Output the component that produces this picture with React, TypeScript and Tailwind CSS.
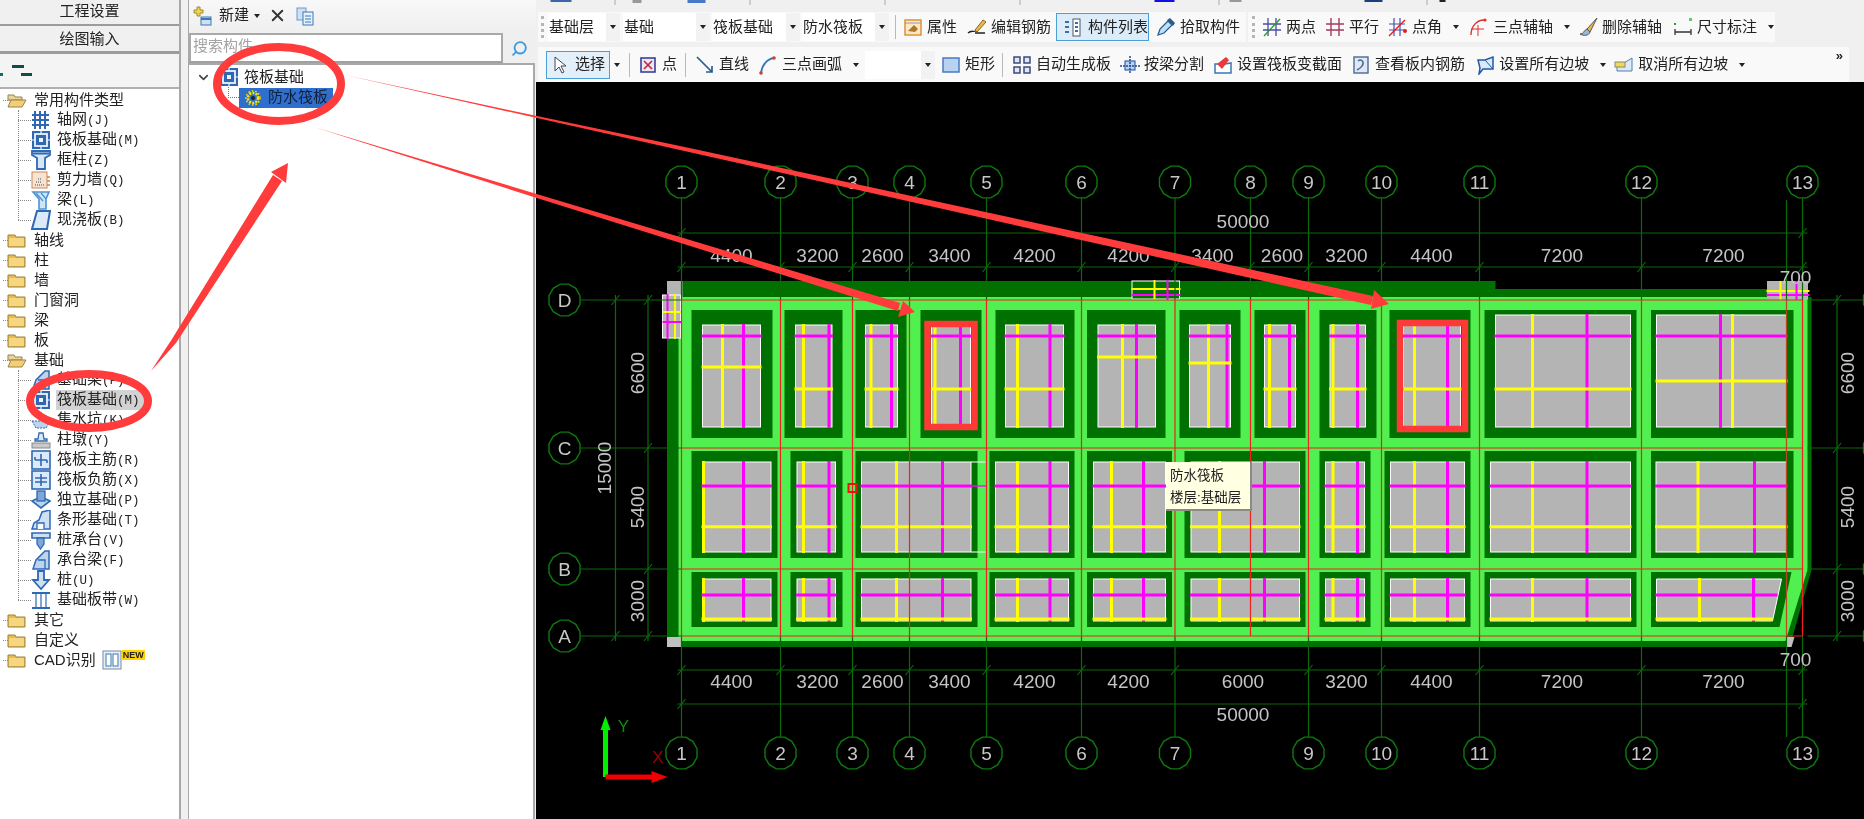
import type { ReactNode } from "react";
import { Search, ChevronDown, X } from "lucide-react";

const blue = "#2f68b4";

function Icon({ name }: { name: string }) {
  const wrap = (c: ReactNode) => (
    <svg viewBox="0 0 20 20" className="w-5 h-5 shrink-0">{c}</svg>
  );
  switch (name) {
    case "folder":
      return wrap(<><path d="M1 5h7l1 2h9v10H1z" fill="#e8bb4a" stroke="#9a8348" /><path d="M2 8h15v8H2z" fill="#f6d77f" /></>);
    case "open":
      return wrap(<><path d="M1 5h6l1 2h7v3H1z" fill="#e9d49c" stroke="#9a8348" /><path d="M4 10h15l-4 7H1z" fill="#f2cf74" stroke="#9a8348" /></>);
    case "grid":
      return wrap(<g stroke={blue} strokeWidth="2" fill="none"><path d="M1 5h17M1 10h17M1 15h17M4 1v18M9 1v18M14 1v18" /></g>);
    case "raft":
      return wrap(<><rect x="1" y="1" width="18" height="18" fill={blue} /><rect x="4" y="4" width="12" height="12" fill="none" stroke="#eef4fb" strokeWidth="1.8" /><rect x="8" y="8" width="4" height="4" fill="#eef4fb" /><path d="M1 10h3M16 10h3M10 1v3M10 16v3" stroke="#eef4fb" strokeWidth="1.2" /></>);
    case "column":
      return wrap(<><path d="M1 1h18v4l-5 3v11H6V8L1 5z" fill="#d7e6f6" stroke={blue} strokeWidth="1.8" /><path d="M2 3.5h16" stroke={blue} strokeWidth="2" /></>);
    case "wall":
      return wrap(<><rect x="1" y="2" width="15" height="16" fill="#f6e3d2" stroke="#c98a5a" /><path d="M4 15h9M5 12h6M7 9h3" stroke="#999" strokeWidth="1.8" strokeDasharray="1 1" /><path d="M16 7h3M16 11h3M16 15h3" stroke="#e08030" strokeWidth="1.3" /></>);
    case "beam":
      return wrap(<><path d="M2 2h16l-3 7v10H8V9z" fill="#cfe4f7" stroke="#4d92d3" strokeWidth="1.6" /><path d="M5 3l7 8M10 3l5 6" stroke="#4d92d3" strokeWidth="1.3" /></>);
    case "slab":
      return wrap(<><path d="M6 1h13l-3 18H1z" fill="#dbe9f8" stroke={blue} strokeWidth="2" /></>);
    case "fbeam":
      return wrap(<><path d="M2 19l3-9 9-9h4v18H2z" fill="#bcd4ee" stroke={blue} strokeWidth="1.5" /><path d="M7 10h7v9" fill="none" stroke={blue} strokeWidth="1.3" /></>);
    case "pit":
      return wrap(<><path d="M1 11h18l-4 7H5z" fill="#bcd4ee" stroke={blue} strokeDasharray="2 1" /><path d="M10 2v8M6 6h8" stroke={blue} /></>);
    case "pier":
      return wrap(<><path d="M8 3h4l1 6h3v2H4V9h3z" fill="#dfe8f2" stroke={blue} strokeWidth="1.3" /><rect x="1" y="13" width="18" height="5" fill="#c9c9c9" stroke="#888" /></>);
    case "rebar1":
    case "rebar2":
      return wrap(<><rect x="1" y="1" width="18" height="18" fill="#dbe9f8" stroke={blue} strokeWidth="1.6" /><path d={name === "rebar1" ? "M4 10h12M10 4v12M4 7v3M16 10v3" : "M4 8h12M4 12h12M10 4v12"} stroke={blue} strokeWidth="1.6" fill="none" /></>);
    case "iso":
      return wrap(<><path d="M1 11l9-4 9 4-9 7z" fill="#bcd4ee" stroke={blue} strokeWidth="1.6" /><rect x="6" y="1" width="8" height="10" fill="#7ea7d8" stroke={blue} strokeWidth="1.3" /></>);
    case "strip":
      return wrap(<><path d="M1 19l2-6 5-3 3-8 4-1 4-1v19z" fill="#cfe0f3" stroke={blue} strokeWidth="1.5" /><path d="M6 19v-6h7v6" fill="#fff" stroke={blue} strokeWidth="1.3" /></>);
    case "cap":
      return wrap(<><path d="M1 3h18v5H1z" fill="#cfe0f3" stroke={blue} strokeWidth="1.6" /><path d="M6 8h7v6l-3.5 5L6 14z" fill="#7ea7d8" stroke={blue} strokeWidth="1.3" /></>);
    case "pile":
      return wrap(<path d="M7 1h6v9h5l-8 9-8-9h5z" fill="#cfe0f3" stroke={blue} strokeWidth="1.8" />);
    case "band":
      return wrap(<><path d="M1 3h18M1 18h18" stroke={blue} strokeWidth="2.2" /><path d="M5 3v14M10 3v14M15 3v14" stroke={blue} strokeWidth="1.2" /></>);
    case "prop":
      return wrap(<><rect x="2" y="3" width="16" height="15" fill="#fbe9c8" stroke="#e08a2a" strokeWidth="1.4" /><path d="M5 14l6-6 4 4-3 3z" fill="#a8792a" /><path d="M2 6h16" stroke="#999" /></>);
    case "edit":
      return wrap(<><path d="M1 16c3-3 5-1 8-2M18 16H8" stroke="#222" strokeWidth="1.3" fill="none" /><path d="M8 13l8-10 3 2-9 10z" fill="#e9b84c" stroke="#8a6a20" /></>);
    case "list":
      return wrap(<><rect x="11" y="2" width="7" height="17" fill="#fff" stroke="#556" /><path d="M3 5h4M3 10h4M3 15h4M13 6h3M13 10h3M13 14h3" stroke="#3a6ea8" strokeWidth="2" /></>);
    case "pick":
      return wrap(<><path d="M2 18l2-6 8-8 4 4-8 8z" fill="#bfe0f5" stroke="#2a5c94" strokeWidth="1.3" /><path d="M11 3l3-2 5 5-2 3z" fill="#2a5c94" /></>);
    case "twopt":
      return wrap(<><path d="M6 1v18M14 1v18M1 7h18M1 13h18" stroke="#4a4ea8" strokeWidth="1.3" /><path d="M2 19L18 2" stroke="#2a9a2a" strokeWidth="1.3" /></>);
    case "parallel":
      return wrap(<path d="M6 1v18M14 1v18M1 7h18M1 13h18" stroke="#a63a5c" strokeWidth="1.4" />);
    case "angle":
      return wrap(<><path d="M6 1v18M12 1v18M1 7h16M1 13h16" stroke="#4a4ea8" strokeWidth="1.2" /><path d="M1 19L17 3" stroke="#e02020" strokeWidth="1.4" /><circle cx="17" cy="14" r="2" fill="#e02020" /></>);
    case "arcaxis":
      return wrap(<><path d="M2 18C2 9 8 3 15 3" fill="none" stroke="#e03030" strokeWidth="1.4" /><circle cx="16" cy="3" r="1.6" fill="#e03030" /><path d="M9 8v11M2 12h13" stroke="#e03030" /></>);
    case "brush":
      return wrap(<><path d="M19 1L9 12l3 3z" fill="#e9b84c" stroke="#555" /><path d="M9 12c-3 1-3 5-7 5 3 2 9 2 10-2z" fill="#9ab6dc" stroke="#555" /></>);
    case "dim":
      return wrap(<><path d="M2 15h16M2 12v6M18 12v6" stroke="#333" strokeWidth="1.3" /><rect x="1" y="6" width="2" height="2" fill="#2a9a2a" /><rect x="16" y="1" width="3" height="3" fill="#5ecb5e" /></>);
    case "cursor":
      return wrap(<path d="M6 2v14l4-4 3 6 2-1-3-6h5z" fill="#fff" stroke="#445" />);
    case "point":
      return wrap(<><rect x="3" y="3" width="14" height="14" fill="#e8e8f4" stroke="#3c3f98" strokeWidth="1.6" /><path d="M6 6l8 8M14 6l-8 8" stroke="#c02040" strokeWidth="1.6" /></>);
    case "line":
      return wrap(<path d="M2 2l15 15M17 11v6h-6" stroke="#2a5c94" strokeWidth="1.7" fill="none" />);
    case "arc":
      return wrap(<><path d="M3 18C4 10 9 4 16 3" fill="none" stroke="#3a78b8" strokeWidth="1.8" /><circle cx="3" cy="18" r="1.8" fill="#d04030" /><circle cx="16" cy="3" r="1.8" fill="#d04030" /></>);
    case "rect":
      return wrap(<rect x="2" y="3" width="16" height="14" fill="#b8d2f2" stroke="#4b7ac0" strokeWidth="1.5" />);
    case "auto":
      return wrap(<><g fill="#dfe8f4" stroke="#3c4a78" strokeWidth="1.5"><rect x="2" y="2" width="6" height="6" /><rect x="12" y="2" width="6" height="6" /><rect x="2" y="12" width="6" height="6" /><rect x="12" y="12" width="6" height="6" /></g></>);
    case "split":
      return wrap(<><rect x="5" y="6" width="10" height="9" fill="#b8d2f2" stroke="#1f4a98" /><path d="M0 11h20M10 1v18" stroke="#1f4a98" strokeWidth="1.5" strokeDasharray="2 1" /></>);
    case "section":
      return wrap(<><path d="M2 18V9h10l6-1v10z" fill="#fff" stroke="#3a78b8" strokeWidth="1.5" /><path d="M4 9l9-7 3 3-7 9z" fill="#e83a3a" /></>);
    case "view":
      return wrap(<><rect x="3" y="2" width="14" height="16" fill="#dfe8f4" stroke="#4b6a98" strokeWidth="1.4" /><path d="M7 6c3-3 7 1 4 5-1 2-3 3-5 4" stroke="#4b6a98" strokeWidth="1.5" fill="none" /></>);
    case "slope":
      return wrap(<><path d="M3 5h7l8-3v12H8l-4 5 1-6z" fill="#dbe9f8" stroke="#1f5aa8" strokeWidth="1.5" /><path d="M10 5l8 9" stroke="#1f5aa8" /></>);
    case "unslope":
      return wrap(<><path d="M3 8h7l8-5v13H3z" fill="#dbe9f8" stroke="#5a7aa8" /><rect x="1" y="7" width="10" height="5" fill="#f4d94c" stroke="#887" /></>);
    case "plus":
      return wrap(<><path d="M5 1h3v3h3v3H8v3H5V7H2V4h3z" fill="#f3d64a" stroke="#a08a30" /><rect x="9" y="11" width="10" height="8" fill="#cfe0f3" stroke="#3a78b8" /><path d="M9 13h10" stroke="#3a78b8" strokeWidth="2" /></>);
    case "copy":
      return wrap(<><rect x="2" y="2" width="9" height="12" fill="#cfe0f3" stroke="#6a9ad0" /><rect x="8" y="6" width="10" height="13" fill="#e8f1fb" stroke="#3a78b8" /><path d="M10 10h6M10 13h6M10 16h6" stroke="#3a78b8" /></>);
    case "gear":
      return wrap(<><circle cx="10" cy="10" r="5" fill="none" stroke="#ffe600" strokeWidth="2.5" strokeDasharray="2 1.2" /><circle cx="10" cy="10" r="7" fill="none" stroke="#ffe600" strokeWidth="1.5" strokeDasharray="1.5 2" /><circle cx="10" cy="10" r="2" fill="#222" /></>);
    default:
      return wrap(null);
  }
}

function Caret() {
  return <span className="w-0 h-0 border-x-[3.5px] border-x-transparent border-t-[4px] border-t-[#222] shrink-0" />;
}

function Tool({ icon, label, caret, className = "" }: { icon: string; label: string; caret?: boolean; className?: string }) {
  return (
    <div className={`flex items-center gap-[4px] shrink-0 whitespace-nowrap ${className}`}>
      <Icon name={icon} />
      <span>{label}</span>
      {caret && <span className="ml-[7px] flex"><Caret /></span>}
    </div>
  );
}

function Combo({ text, className }: { text: string; className: string }) {
  return (
    <div className={`h-[28px] bg-white flex items-center justify-between shrink-0 ${className}`}>
      <span className="pl-[1px] whitespace-nowrap">{text}</span>
      <span className="w-[14px] h-full bg-[#f2f2f2] flex items-center justify-center"><Caret /></span>
    </div>
  );
}

const Divider = () => <span className="w-px h-[24px] bg-[#b9b9b9] shrink-0 block" />;
const Grip = () => <span className="w-[3px] h-[22px] shrink-0 border-l-[3px] border-dotted border-[#b5b5b5]" />;

const commonItems = [
  ["grid", "轴网", "(J)"],
  ["raft", "筏板基础", "(M)"],
  ["column", "框柱", "(Z)"],
  ["wall", "剪力墙", "(Q)"],
  ["beam", "梁", "(L)"],
  ["slab", "现浇板", "(B)"],
];

const foundationItems = [
  ["fbeam", "基础梁", "(F)"],
  ["raft", "筏板基础", "(M)"],
  ["pit", "集水坑", "(K)"],
  ["pier", "柱墩", "(Y)"],
  ["rebar1", "筏板主筋", "(R)"],
  ["rebar2", "筏板负筋", "(X)"],
  ["iso", "独立基础", "(P)"],
  ["strip", "条形基础", "(T)"],
  ["cap", "桩承台", "(V)"],
  ["fbeam", "承台梁", "(F)"],
  ["pile", "桩", "(U)"],
  ["band", "基础板带", "(W)"],
];

function FolderRow({ label, open, children }: { label: string; open?: boolean; children?: ReactNode }) {
  return (
    <div className="h-5 flex items-center whitespace-nowrap">
      <span className="w-[7px] border-t border-dotted border-[#888] ml-[3px] -mr-[3px]" />
      <Icon name={open ? "open" : "folder"} />
      <span className="ml-[7px]">{label}</span>
      {children}
    </div>
  );
}

function ChildGroup({ items, selected }: { items: string[][]; selected?: number }) {
  return (
    <div className="relative">
      <span className="absolute left-[18px] top-0 bottom-[10px] border-l border-dotted border-[#888]" />
      {items.map(([icon, name, key], i) => (
        <div key={name + i} className="h-5 flex items-center whitespace-nowrap pl-[18px]">
          <span className="w-[13px] border-t border-dotted border-[#888]" />
          <Icon name={icon} />
          <span className={`ml-[5px] pl-[1px] pr-[5px] leading-[18px] ${selected === i ? "bg-[#d2d2d2]" : ""}`}>
            {name}
            <span className="font-['Liberation_Mono'] text-[12.5px]">{key}</span>
          </span>
        </div>
      ))}
    </div>
  );
}

function LeftPanel() {
  return (
    <div className="w-[181px] shrink-0 flex flex-col text-[15px] text-[#222] border-r-2 border-[#a8a8a8]">
      <div className="h-[26px] bg-[#f0f0f0] border-b-2 border-[#9c9c9c] flex items-center justify-center pb-[2px]">工程设置</div>
      <div className="h-[27px] mt-px bg-[#f0f0f0] border-b-[3px] border-[#9c9c9c] flex items-center justify-center">绘图输入</div>
      <div className="h-[35px] bg-[#f4f4f4] border-b-2 border-[#b0b0b0] flex items-center">
        <svg viewBox="0 0 40 14" className="w-10 h-[14px]">
          <rect x="0" y="9" width="3" height="3" fill="#146b6b" />
          <rect x="12" y="1" width="12" height="3" fill="#134a4a" />
          <rect x="21" y="9" width="11" height="3" fill="#134a4a" />
        </svg>
      </div>
      <div className="flex-1 bg-white pt-[1px]">
        <FolderRow label="常用构件类型" open />
        <ChildGroup items={commonItems} />
        <FolderRow label="轴线" />
        <FolderRow label="柱" />
        <FolderRow label="墙" />
        <FolderRow label="门窗洞" />
        <FolderRow label="梁" />
        <FolderRow label="板" />
        <FolderRow label="基础" open />
        <ChildGroup items={foundationItems} selected={1} />
        <FolderRow label="其它" />
        <FolderRow label="自定义" />
        <FolderRow label="CAD识别">
          <svg viewBox="0 0 20 20" className="w-5 h-5 ml-[6px]">
            <rect x="1" y="1" width="18" height="18" fill="#e6eef8" stroke="#7b8aa0" />
            <rect x="4" y="4" width="5" height="12" fill="#fff" stroke="#3a78b8" />
            <rect x="11" y="4" width="5" height="12" fill="#fff" stroke="#3a78b8" />
          </svg>
          <span className="mb-[10px] px-[1px] bg-[#ffd400] text-[9px] leading-[10px] font-bold font-['Liberation_Sans']">NEW</span>
        </FolderRow>
      </div>
    </div>
  );
}

function MiddlePanel() {
  return (
    <div className="w-[349px] shrink-0 flex flex-col ml-[7px] mr-[-1px] border-l border-[#a8a8a8] text-[15px] text-[#222]">
      <div className="h-[33px] flex items-center pl-[3px] pb-[2px] bg-gradient-to-b from-[#f8f8f8] to-[#efefef]">
        <Icon name="plus" />
        <span className="ml-[7px]">新建</span>
        <span className="ml-[5px] flex"><Caret /></span>
        <X className="w-[19px] h-[19px] ml-[8px] text-[#333]" strokeWidth={2.4} />
        <span className="ml-[8px]"><Icon name="copy" /></span>
      </div>
      <div className="h-[30px] flex">
        <div className="w-[314px] bg-white border-2 border-[#a9a9a9] border-b-[#a0a0a0] flex items-center pl-[2px] pb-[3px] text-[#a3a3a3]">搜索构件</div>
        <div className="w-[32px] bg-[#efefef] flex items-center justify-center">
          <Search className="w-[17px] h-[17px] -scale-x-100 text-[#3a9ae0]" strokeWidth={2.6} />
        </div>
      </div>
      <div className="flex-1 w-[346px] bg-white border-x-2 border-t-2 border-[#a9a9a9] pt-[2px] border-l-0">
        <div className="h-5 flex items-center pl-[7px]">
          <ChevronDown className="w-[15px] h-[15px] text-[#444]" strokeWidth={2.6} />
          <span className="ml-[8px]"><Icon name="raft" /></span>
          <span className="ml-[5px]">筏板基础</span>
        </div>
        <div className="h-[21px] flex items-center pl-[39px]">
          <span className="w-[11px] h-[11px] -mt-[10px] border-l border-b border-dotted border-[#777]" />
          <div className="h-[20px] w-[94px] bg-[#2f6fcb] flex items-center pl-[4px]">
            <Icon name="gear" />
            <span className="ml-[5px] text-[#10203a]">防水筏板</span>
          </div>
        </div>
      </div>
    </div>
  );
}

function TopStrip() {
  return (
    <svg viewBox="537 0 1327 12" className="w-full h-3 block">
      {[615, 750, 885, 1020, 1219, 1427].map((x) => (
        <rect key={x} x={x} y="0" width="1" height="5" fill="#aaa" />
      ))}
      <rect x="551" y="0" width="21" height="2" fill="#3a68a8" />
      <rect x="633" y="0" width="9" height="3" fill="#999" />
      <rect x="688" y="0" width="18" height="3" fill="#4a78c8" />
      <rect x="1155" y="0" width="20" height="2" fill="#1010e0" />
      <rect x="1230" y="0" width="12" height="2" fill="#999" />
      <rect x="1365" y="0" width="18" height="2" fill="#1a3f7a" />
      <rect x="1440" y="0" width="6" height="2" fill="#222" />
    </svg>
  );
}

function Toolbars() {
  return (
    <div className="h-[82px] shrink-0 bg-[#f0f0f0] text-[15px] text-[#222]">
      <TopStrip />
      <div className="h-[30px] flex pl-[2px] gap-[2px]">
        <div className="w-[708px] bg-[#f9f9f9] flex items-center pl-[3px]">
          <Grip />
          <div className="w-[4px]" />
          <Combo text="基础层" className="w-[72px]" />
          <Combo text="基础" className="w-[87px] ml-[3px]" />
          <Combo text="筏板基础" className="w-[88px] ml-[2px]" />
          <Combo text="防水筏板" className="w-[87px] ml-[2px]" />
          <span className="ml-[6px] mr-[7px]"><Divider /></span>
          <Tool icon="prop" label="属性" />
          <Tool icon="edit" label="编辑钢筋" className="ml-[10px]" />
          <div className="ml-[5px] h-[28px] w-[93px] bg-[#dcecf8] border border-[#4a9fd8] flex items-center pl-[5px] gap-[6px]">
            <Icon name="list" />
            <span>构件列表</span>
          </div>
          <Tool icon="pick" label="拾取构件" className="ml-[7px]" />
        </div>
        <div className="w-[527px] bg-[#f9f9f9] flex items-center pl-[4px]">
          <Grip />
          <Tool icon="twopt" label="两点" className="ml-[7px]" />
          <Tool icon="parallel" label="平行" className="ml-[9px]" />
          <Tool icon="angle" label="点角" caret className="ml-[9px]" />
          <Tool icon="arcaxis" label="三点辅轴" caret className="ml-[10px]" />
          <Tool icon="brush" label="删除辅轴" className="ml-[8px]" />
          <Tool icon="dim" label="尺寸标注" caret className="ml-[11px]" />
        </div>
      </div>
      <div className="h-[35px] mt-[5px] flex pl-[2px]">
        <div className="w-[1311px] bg-[#f9f9f9] flex items-center pl-[8px] relative">
          <div className="h-[28px] w-[64px] shrink-0 bg-[#e3eff9] border border-[#4a9fd8] flex items-center pl-[2px] gap-[6px] whitespace-nowrap">
            <Icon name="cursor" />
            <span>选择</span>
          </div>
          <span className="ml-[4px] mr-[9px] flex"><Caret /></span>
          <Divider />
          <Tool icon="point" label="点" className="ml-[8px]" />
          <span className="ml-[8px]"><Divider /></span>
          <Tool icon="line" label="直线" className="ml-[9px]" />
          <Tool icon="arc" label="三点画弧" caret className="ml-[9px]" />
          <Combo text="" className="w-[70px] ml-[6px]" />
          <Tool icon="rect" label="矩形" className="ml-[6px]" />
          <span className="ml-[7px]"><Divider /></span>
          <Tool icon="auto" label="自动生成板" className="ml-[9px]" />
          <Tool icon="split" label="按梁分割" className="ml-[9px]" />
          <Tool icon="section" label="设置筏板变截面" className="ml-[9px]" />
          <Tool icon="view" label="查看板内钢筋" className="ml-[9px]" />
          <Tool icon="slope" label="设置所有边坡" caret className="ml-[10px]" />
          <Tool icon="unslope" label="取消所有边坡" caret className="ml-[8px]" />
          <span className="absolute right-[6px] top-[2px] text-[13px] font-bold leading-none">»</span>
        </div>
      </div>
    </div>
  );
}

const GREEN = "#0b6b0b";
const cols: [string, number][] = [
  ["1", 682], ["2", 781], ["3", 853], ["4", 910], ["5", 987], ["6", 1082], ["7", 1175.5],
  ["8", 1251], ["9", 1309], ["10", 1382], ["11", 1480], ["12", 1642], ["13", 1803],
];
const rows: [string, number][] = [["D", 300], ["C", 448], ["B", 569], ["A", 636]];

type Panel = { d: [number, number]; g: [number, number]; y: number; m: number; yh?: number; gt?: number };

const row1: Panel[] = [
  { d: [692, 773], g: [703, 761], y: 723, m: 744, yh: 367 },
  { d: [785, 843], g: [796, 832.5], y: 804, m: 829.5 },
  { d: [856, 907], g: [866, 898], y: 871.5, m: 892 },
  { d: [921, 982], g: [932, 971], y: 935.5, m: 961 },
  { d: [996, 1075], g: [1006, 1064], y: 1018, m: 1050.5 },
  { d: [1087.5, 1166], g: [1098.5, 1156], y: 1123, m: 1137, yh: 357 },
  { d: [1180, 1241], g: [1190, 1231], y: 1209, m: 1227.5, yh: 363 },
  { d: [1255, 1306], g: [1265, 1296], y: 1270, m: 1290 },
  { d: [1320, 1377], g: [1330.5, 1366], y: 1333.5, m: 1358 },
  { d: [1390, 1471], g: [1404, 1461], y: 1415, m: 1448 },
  { d: [1485, 1637], g: [1496, 1631], y: 1533, m: 1587.5, gt: 315 },
  { d: [1651.5, 1794], g: [1657, 1787], y: 1733, m: 1721, yh: 381, gt: 315 },
];
const row23: Panel[] = [
  { d: [692, 778], g: [703, 771.5], y: 704, m: 744 },
  { d: [791, 843], g: [797.5, 836], y: 804, m: 829.5 },
  { d: [856, 978], g: [862, 971.5], y: 897, m: 943 },
  { d: [990, 1075], g: [996, 1069], y: 1018, m: 1050.5 },
  { d: [1087.5, 1172.5], g: [1094, 1166], y: 1112, m: 1144 },
  { d: [1185, 1306], g: [1191.5, 1300], y: 1220, m: 1265 },
  { d: [1320, 1371], g: [1326, 1365], y: 1333.5, m: 1358 },
  { d: [1385, 1471], g: [1391, 1465], y: 1415, m: 1448 },
  { d: [1485, 1637], g: [1491, 1631], y: 1533, m: 1587.5 },
  { d: [1651.5, 1794], g: [1656.5, 1787], y: 1698.5, m: 1755 },
];

const BAR = "3";

function PanelRow({ panels, top, bottom, gTop, gBottom, mh, yh }: { panels: Panel[]; top: number; bottom: number; gTop: number; gBottom: number; mh: number; yh: number }) {
  return (
    <>
      {panels.map((p) => {
        const gt = p.gt ?? gTop;
        return (
          <g key={p.d[0]}>
            <rect x={p.d[0]} y={top} width={p.d[1] - p.d[0]} height={bottom - top} fill="#007000" />
            <rect x={p.g[0]} y={gt} width={p.g[1] - p.g[0]} height={gBottom - gt} fill="#b4b4b4" stroke="#fff" />
            <path d={`M${p.y} ${gt - 1}V${gBottom + 1}`} stroke="#ffff00" strokeWidth={BAR} />
            <path d={`M${p.m} ${gt - 1}V${gBottom + 1}`} stroke="#ff00ff" strokeWidth={BAR} />
            <path d={`M${p.g[0] - 1} ${p.yh ?? yh}H${p.g[1] + 1}`} stroke="#ffff00" strokeWidth={BAR} />
            <path d={`M${p.g[0] - 1} ${mh}H${p.g[1] + 1}`} stroke="#ff00ff" strokeWidth={BAR} />
          </g>
        );
      })}
    </>
  );
}

function Bubble({ x, y, label }: { x: number; y: number; label?: string }) {
  const pts = Array.from({ length: 12 }, (_, i) => {
    const a = (i * Math.PI) / 6 + Math.PI / 12;
    return `${(x + 16 * Math.cos(a)).toFixed(1)},${(y + 16.5 * Math.sin(a)).toFixed(1)}`;
  }).join(" ");
  return (
    <g>
      <polygon points={pts} fill="#000" stroke="#0c7a0c" strokeWidth="1.4" />
      {label && <text x={x} y={y + 7} textAnchor="middle" fontSize="19" fill="#c8c8c8">{label}</text>}
    </g>
  );
}

function Tick({ x, y }: { x: number; y: number }) {
  return <path d={`M${x - 4} ${y + 5}L${x + 4} ${y - 5}`} stroke={GREEN} strokeWidth="1.2" />;
}

function Dim({ x, y, t, rot }: { x: number; y: number; t: string; rot?: boolean }) {
  return (
    <text x={x} y={y + 7} textAnchor="middle" fontSize="19" fill="#c4c4c4" transform={rot ? `rotate(-90 ${x} ${y})` : undefined}>{t}</text>
  );
}

const topDims: [string, number][] = [
  ["4400", 732], ["3200", 818], ["2600", 883], ["3400", 950], ["4200", 1035], ["4200", 1129],
  ["3400", 1213], ["2600", 1282.5], ["3200", 1347], ["4400", 1432], ["7200", 1562.5], ["7200", 1724],
];
const bottomDims: [string, number][] = [
  ["4400", 732], ["3200", 818], ["2600", 883], ["3400", 950], ["4200", 1035], ["4200", 1129],
  ["6000", 1243.5], ["3200", 1347], ["4400", 1432], ["7200", 1562.5], ["7200", 1724],
];

function Drawing() {
  return (
    <svg viewBox="537 82 1327 737" className="w-full h-full block font-['Liberation_Sans']">
      {/* slab */}
      <polygon points="667.5,281 1496,281 1496,289 1767,289 1812,297 1812,570 1793,637 1787,647 667.5,647" fill="#007000" />
      <polygon points="679,297 1808,297 1808,570 1786,641 679,641" fill="#4ff04f" />
      <rect x="667.5" y="281" width="15.5" height="16" fill="#b4b4b4" />
      <rect x="667.5" y="637" width="14.5" height="10" fill="#c0c0c0" />
      <polygon points="1787,637 1795,637 1792,647 1787,647" fill="#c0c0c0" />

      <PanelRow panels={row1} top={310} bottom={438} gTop={325} gBottom={427} mh={336} yh={389} />
      <PanelRow panels={row23} top={451} bottom={558} gTop={462} gBottom={552} mh={486} yh={526.7} />
      <PanelRow panels={row23.slice(0, 9)} top={572} bottom={627} gTop={579} gBottom={621} mh={595} yh={619} />
      <polygon points="1651.5,572 1792,572 1780,627 1651.5,627" fill="#007000" />
      <polygon points="1657,579 1782,579 1773,621 1657,621" fill="#b4b4b4" stroke="#fff" />
      <path d="M1700 578V622" stroke="#ffff00" strokeWidth={BAR} />
      <path d="M1754 578V622" stroke="#ff00ff" strokeWidth={BAR} />
      <path d="M1656 619H1773" stroke="#ffff00" strokeWidth={BAR} />
      <path d="M1656 595H1778" stroke="#ff00ff" strokeWidth={BAR} />
      <path d="M971.5 462H986M971.5 552H986" stroke="#fff" />
      <path d="M971 486H987" stroke="#ff00ff" strokeWidth="1.4" />

      {/* small pieces on the slab edge */}
      <rect x="663" y="295" width="18" height="43" fill="#b4b4b4" stroke="#fff" />
      <path d="M675.5 294V339" stroke="#ffff00" strokeWidth="2" />
      <path d="M668 294V339" stroke="#ff00ff" strokeWidth="2" />
      <path d="M663 312H682" stroke="#ffff00" strokeWidth="2" />
      <path d="M663 322H682" stroke="#ff00ff" strokeWidth="2" />
      <rect x="1132.5" y="281" width="47.5" height="18" fill="#007000" stroke="#fff" />
      <path d="M1132 289H1181" stroke="#ffff00" strokeWidth="2" />
      <path d="M1132 295H1181" stroke="#ff00ff" strokeWidth="2" />
      <path d="M1155 280V300" stroke="#ffff00" strokeWidth="2" />
      <path d="M1168 280V300" stroke="#ff00ff" strokeWidth="2" />
      <rect x="1767.5" y="281" width="41" height="19" fill="#b4b4b4" />
      <path d="M1767 291H1810" stroke="#ffff00" strokeWidth="2" />
      <path d="M1767 295H1810" stroke="#ff00ff" strokeWidth="2" />
      <path d="M1781 281V300" stroke="#ffff00" strokeWidth="2" />
      <path d="M1797 281V300" stroke="#ff00ff" strokeWidth="2" />

      {/* axes */}
      {cols.map(([n, x]) => (
        <g key={n}>
          <path d={`M${x} 198V300M${x} 636V${n === "8" ? 636 : 737}`} stroke={GREEN} strokeWidth="1.2" />
          <path d={`M${x} 300V636`} stroke="#f02020" strokeWidth="1.2" />
          <Tick x={x} y={267} />
          {n !== "8" && <Tick x={x} y={670} />}
          <Bubble x={x} y={182} label={n} />
          {n !== "8" && <Bubble x={x} y={753} label={n} />}
        </g>
      ))}
      <path d="M1787 200V300M1787 636V737" stroke={GREEN} strokeWidth="1.2" />
      <path d="M1787 300V636" stroke="#b84a20" strokeWidth="1.2" />
      {rows.map(([n, y]) => (
        <g key={n}>
          <path d={`M581 ${y}H682M1808 ${y}H1864`} stroke={GREEN} strokeWidth="1.2" />
          <path d={`M682 ${y}H1803`} stroke="#f02020" strokeWidth="1.2" />
          <Tick x={648.5} y={y} />
          <Tick x={1837.5} y={y} />
          <Bubble x={565} y={y} label={n} />
          <Bubble x={1879.5} y={y} />
        </g>
      ))}
      <Tick x={616} y={300} />
      <Tick x={616} y={636} />
      <Tick x={682} y={233} />
      <Tick x={1803} y={233} />
      <Tick x={682} y={704} />
      <Tick x={1803} y={704} />
      <path d="M678 233H1808M678 267H1808M678 670H1808M678 704H1808M616 295V641M648.5 295V641M1837.5 295V641" stroke={GREEN} strokeWidth="1.2" fill="none" />

      {/* dimensions */}
      {topDims.map(([t, x]) => <Dim key={"t" + x} x={x} y={255} t={t} />)}
      {bottomDims.map(([t, x]) => <Dim key={"b" + x} x={x} y={681} t={t} />)}
      <Dim x={1243.5} y={221} t="50000" />
      <Dim x={1243.5} y={714} t="50000" />
      <Dim x={1796} y={277} t="700" />
      <Dim x={1796} y={659} t="700" />
      <Dim x={637.5} y={373} t="6600" rot />
      <Dim x={637.5} y={507} t="5400" rot />
      <Dim x={637.5} y={601} t="3000" rot />
      <Dim x={604} y={468} t="15000" rot />
      <Dim x={1847} y={373} t="6600" rot />
      <Dim x={1847} y={507} t="5400" rot />
      <Dim x={1847} y={601} t="3000" rot />

      {/* red frames around the picked slabs */}
      <rect x="928" y="324" width="47" height="103" fill="none" stroke="#ff3838" strokeWidth="6.5" />
      <rect x="1400.5" y="323" width="65" height="106" fill="none" stroke="#ff3838" strokeWidth="6.5" />
      <rect x="849" y="484" width="8" height="8" fill="none" stroke="#f01010" strokeWidth="2" />

      {/* coordinate arrows */}
      <path d="M606 777V728" stroke="#00f000" strokeWidth="5" />
      <polygon points="606,716 611,730 601,730" fill="#00f000" />
      <path d="M606 777H655" stroke="#f00000" strokeWidth="5" />
      <polygon points="668,777 652,771 652,783" fill="#f00000" />
      <text x="624" y="732" textAnchor="middle" fontSize="17" fill="#0c8c0c">Y</text>
      <text x="658.5" y="763" textAnchor="middle" fontSize="17" fill="#a00000">X</text>
    </svg>
  );
}

function Annotations() {
  return (
    <svg viewBox="0 0 1864 819" className="absolute inset-0 w-full h-full pointer-events-none">
      <ellipse cx="279" cy="84" rx="62" ry="37" fill="none" stroke="#ff3b3b" strokeWidth="8" />
      <ellipse cx="89" cy="401" rx="59" ry="27" fill="none" stroke="#ff3b3b" strokeWidth="8" />
      <polygon points="151,371 172,339 273,175 282,181 176,343" fill="#ff3b3b" />
      <polygon points="288,163 271,172 286,183" fill="#ff3b3b" />
      <polygon points="345,75 537,116 680,146 1373,296 1371,305 680,150 537,118" fill="#ff3b3b" />
      <polygon points="1389,304 1374,290 1371,309" fill="#ff3b3b" />
      <polygon points="314,127 540,195 900,303 898,311 540,199" fill="#ff3b3b" />
      <polygon points="915,312 903,301 898,317" fill="#ff3b3b" />
    </svg>
  );
}

export default function App() {
  return (
    <div className="relative w-[1864px] h-[819px] overflow-hidden flex bg-[#f0f0f0] blur-[0.5px] font-['Liberation_Sans','Noto_Sans_CJK_SC',sans-serif]">
      <LeftPanel />
      <MiddlePanel />
      <div className="flex-1 flex flex-col min-w-0">
        <Toolbars />
        <div className="flex-1 bg-black min-h-0">
          <Drawing />
        </div>
      </div>
      <div className="absolute left-[1166px] top-[462px] w-[86px] h-[49px] bg-[#ffffe1] border-r-2 border-b-2 border-[#8a8a80] px-[4px] pt-[3px] text-[13.5px] leading-[22px] text-[#222] whitespace-nowrap">
        <div>防水筏板</div>
        <div>楼层:基础层</div>
      </div>
      <Annotations />
    </div>
  );
}
